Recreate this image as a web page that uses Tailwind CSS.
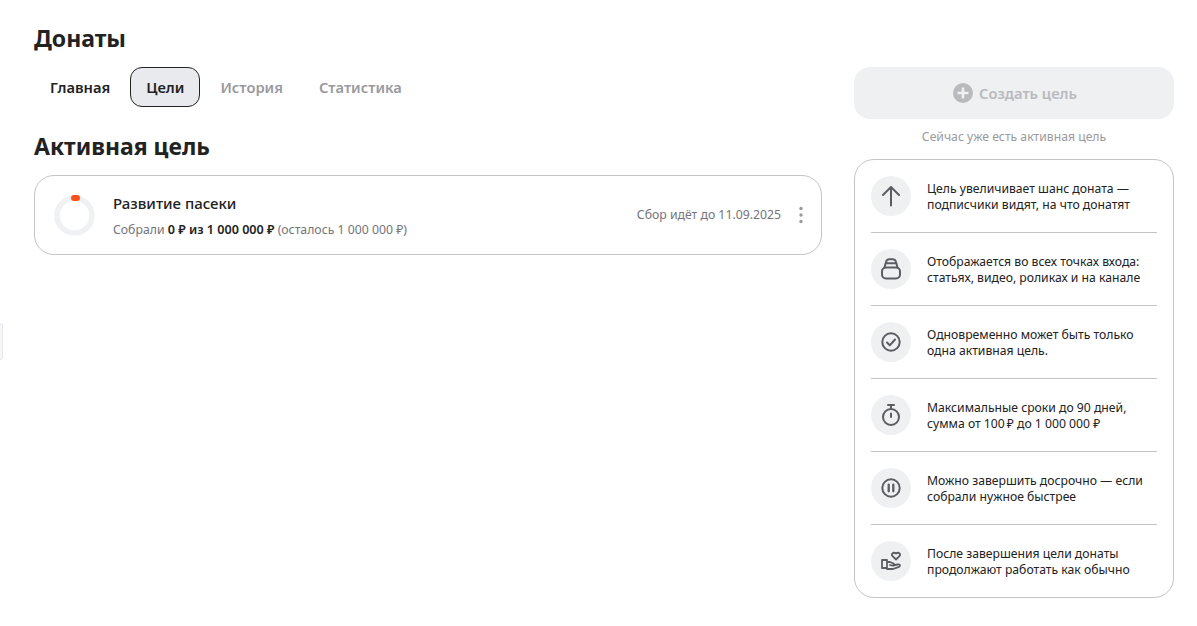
<!DOCTYPE html>
<html lang="ru">
<head>
    <meta charset="UTF-8">
    <title>Донаты</title>
    <script src="https://cdn.jsdelivr.net/npm/@tailwindcss/browser@4"></script>
</head>
<body class="bg-white font-['Noto_Sans',sans-serif] text-[#222222]">
    <div class="relative h-[626px] w-[1197px] overflow-hidden">
        <div class="absolute left-0 top-[323px] h-[37px] w-[3px] rounded-r-sm border border-l-0 border-[#e6e7ec] bg-[#f7f7f9]"></div>

        <div class="flex gap-8 pl-[34px] pr-[23px]">
            <main class="w-[788px]">
                <h1 class="mt-[23px] h-[30px] text-[23px] font-bold leading-[30px]">Донаты</h1>
                <nav class="mt-[14px] flex gap-1 text-[14.7px] font-semibold leading-[20px]">
                    <a class="flex h-10 items-center rounded-[12px] px-4">Главная</a>
                    <a class="flex h-10 items-center rounded-[12px] border border-[#222222] bg-[#e9eaee] px-[15px]">Цели</a>
                    <a class="flex h-10 items-center rounded-[12px] px-4 text-[#9a9a9e]">История</a>
                    <a class="flex h-10 items-center rounded-[12px] px-4 text-[#9a9a9e]">Статистика</a>
                </nav>
                <h2 class="mt-[23px] h-[32px] text-[23px] font-bold leading-[32px]">Активная цель</h2>
                <div class="mt-[13px] flex h-[80px] items-center rounded-[20px] border border-[#c4c4c6] pl-[19px] pr-[14px]">
                    <svg class="mr-[18px] shrink-0" width="41" height="41" viewBox="0 0 41 41" fill="none">
                        <circle cx="20.5" cy="20.5" r="17.5" stroke="#f0f1f3" stroke-width="5.5"/>
                        <rect x="17" y="0" width="9" height="6" rx="3" fill="#ff5019"/>
                    </svg>
                    <div class="flex-1">
                        <div class="text-[15px] font-medium leading-[20px]">Развитие пасеки</div>
                        <div class="mt-[8px] pt-px text-[12.25px] leading-[16px] text-[#74747a]">Собрали <span class="text-[12.6px] font-semibold text-[#222222]">0 ₽ из 1 000 000 ₽</span> (осталось 1 000 000 ₽)</div>
                    </div>
                    <span class="mr-[14px] text-[12.25px] leading-[16px] text-[#74747a]">Сбор идёт до 11.09.2025</span>
                    <svg width="12" height="18" viewBox="0 0 12 18" fill="#9a9a9e">
                        <circle cx="6" cy="2.500" r="1.700"/><circle cx="6" cy="9" r="1.700"/><circle cx="6" cy="15.500" r="1.700"/>
                    </svg>
                </div>
            </main>

            <aside class="mt-[67px] w-[320px]">
                <button class="flex h-[52px] w-full items-center justify-center gap-[6px] rounded-[16px] bg-[#eff0f2] pl-[2px] text-[14.7px] font-semibold text-[#b9babd]">
                    <svg width="20" height="20" viewBox="0 0 20 20">
                        <circle cx="10" cy="10" r="10" fill="#b9babd"/>
                        <path d="M10 4.500v11M4.500 10h11" stroke="#eff0f2" stroke-width="2.600"/>
                    </svg>
                    Создать цель
                </button>
                <p class="mt-[9px] pt-px text-center text-[12.2px] leading-[16px] text-[#9a9a9e]">Сейчас уже есть активная цель</p>
                <ul class="mt-[14px] rounded-[20px] border border-[#c4c4c6] px-4 pb-0 pt-4 text-[12.2px] leading-[16px] text-[#222222]">
                    <li class="flex gap-4 border-b border-[#c4c4c6] pb-4">
                        <span class="flex size-10 shrink-0 items-center justify-center rounded-full bg-[#eff0f2]">
                            <svg width="24" height="24" viewBox="0 0 24 24" fill="none" stroke="#5c5c62" stroke-width="2" stroke-linecap="round" stroke-linejoin="round"><path d="M12 21.500V3M4 11l8-8 8 8"/></svg>
                        </span>
                        <p class="pt-[5px]">Цель увеличивает шанс доната —<br>подписчики видят, на что донатят</p>
                    </li>
                    <li class="mt-4 flex gap-4 border-b border-[#c4c4c6] pb-4">
                        <span class="flex size-10 shrink-0 items-center justify-center rounded-full bg-[#eff0f2]">
                            <svg width="24" height="24" viewBox="0 0 24 24" fill="none" stroke="#5c5c62" stroke-width="2" stroke-linecap="round" stroke-linejoin="round"><rect x="3" y="10.500" width="18" height="11" rx="4"/><path d="M5.500 10.500 7 5c.4-1.700 1.500-2.800 3.200-2.800h3.600c1.700 0 2.800 1.100 3.200 2.800l1.500 5.500M6.800 6.300h10.400"/></svg>
                        </span>
                        <p class="pt-[5px]">Отображается во всех точках входа:<br>статьях, видео, роликах и на канале</p>
                    </li>
                    <li class="mt-4 flex gap-4 border-b border-[#c4c4c6] pb-4">
                        <span class="flex size-10 shrink-0 items-center justify-center rounded-full bg-[#eff0f2]">
                            <svg width="24" height="24" viewBox="0 0 24 24" fill="none" stroke="#5c5c62" stroke-width="2" stroke-linecap="round" stroke-linejoin="round"><circle cx="12" cy="12" r="8.700"/><path d="m8 12.500 2.800 2.800L16 9.500"/></svg>
                        </span>
                        <p class="pt-[5px]">Одновременно может быть только<br>одна активная цель.</p>
                    </li>
                    <li class="mt-4 flex gap-4 border-b border-[#c4c4c6] pb-4">
                        <span class="flex size-10 shrink-0 items-center justify-center rounded-full bg-[#eff0f2]">
                            <svg width="24" height="24" viewBox="0 0 24 24" fill="none" stroke="#5c5c62" stroke-width="2" stroke-linecap="round" stroke-linejoin="round"><circle cx="12" cy="14" r="8"/><path d="M9 2h6M12 2v3.500M12 10.500v3.500"/></svg>
                        </span>
                        <p class="pt-[5px]">Максимальные сроки до 90 дней,<br>сумма от 100&#8201;₽ до 1 000 000 ₽</p>
                    </li>
                    <li class="mt-4 flex gap-4 border-b border-[#c4c4c6] pb-4">
                        <span class="flex size-10 shrink-0 items-center justify-center rounded-full bg-[#eff0f2]">
                            <svg width="24" height="24" viewBox="0 0 24 24" fill="none" stroke="#5c5c62" stroke-width="2" stroke-linecap="round" stroke-linejoin="round"><circle cx="12" cy="12" r="8.700"/><path d="M9.700 8.700v6.600M14.300 8.700v6.600" stroke-width="2.300"/></svg>
                        </span>
                        <p class="pt-[5px]">Можно завершить досрочно — если<br>собрали нужное быстрее</p>
                    </li>
                    <li class="mt-4 flex gap-4 pb-4">
                        <span class="flex size-10 shrink-0 items-center justify-center rounded-full bg-[#eff0f2]">
                            <svg width="24" height="24" viewBox="0 0 24 24" fill="none" stroke="#5c5c62" stroke-width="1.800" stroke-linecap="round" stroke-linejoin="round"><path d="m17 10.500-3.400-3.400c-1.700-1.800.4-4.600 3.400-2.600 3-2 5.100.8 3.400 2.600z"/><path d="M3 11h5v8H3zM8 13h3l3.500 1.500c1.500.7.8 2.500-.8 2.200L11 16M14 16.500l4.500-1c2.300-.5 3.300 1.300 1.500 2.300L14 20H8"/></svg>
                        </span>
                        <p class="pt-[5px]">После завершения цели донаты<br>продолжают работать как обычно</p>
                    </li>
                </ul>
            </aside>
        </div>
    </div>
</body>
</html>
